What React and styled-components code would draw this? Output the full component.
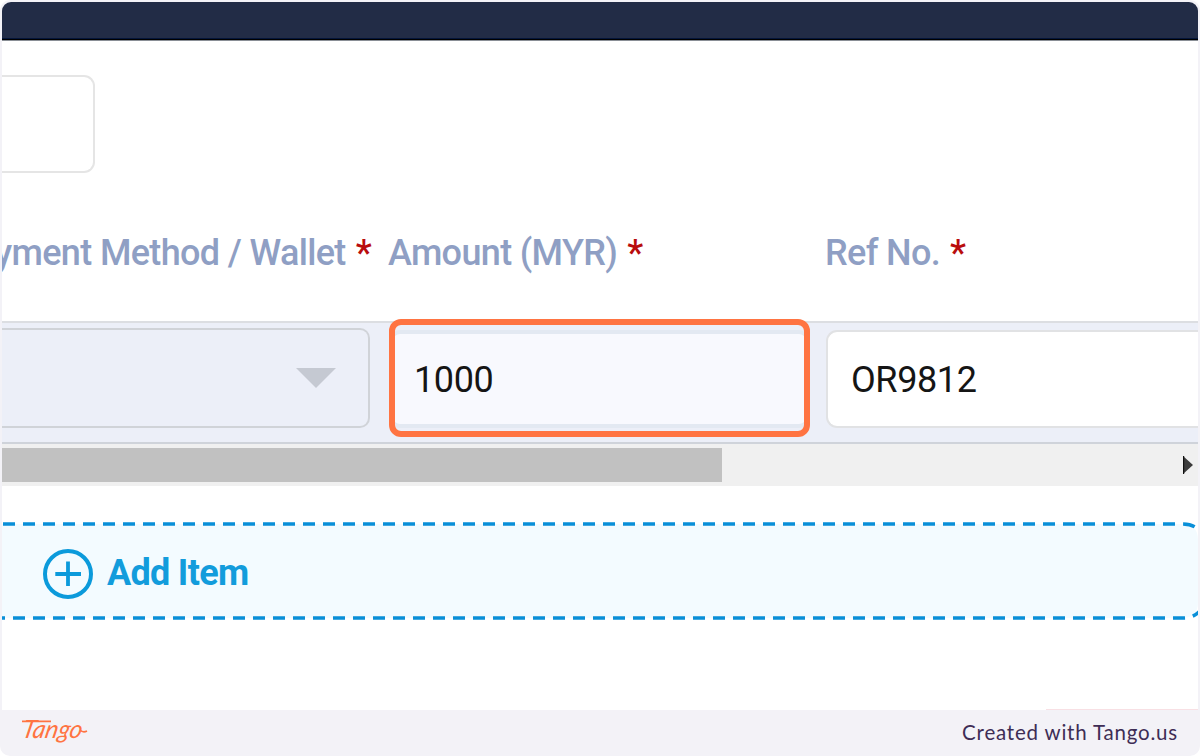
import React from 'react'
import styled, { createGlobalStyle } from 'styled-components'

const columns = [
    { name: "Payment Method / Wallet", width: 386, end: true },
    { name: "Amount (MYR)", width: 437 },
    { name: "Ref No.", width: 373 },
]

const App = () => {
    return (
        <>
            <GlobalStyle />
            <Page>
                <Screen>
                    <TopBar />
                    <FieldSection>
                        <EmptyField />
                    </FieldSection>
                    <TableHead>
                        {columns.map((column) => (
                            <HeadCell key={column.name} $width={column.width} $end={column.end}>
                                <Label>{column.name}</Label>
                                <Required>*</Required>
                            </HeadCell>
                        ))}
                    </TableHead>
                    <TableRow>
                        <SelectBox>
                            <Caret viewBox="0 0 40 20"><path d="M0 0H40L20 20Z" fill="#c5c9d2" /></Caret>
                        </SelectBox>
                        <AmountCell>
                            <AmountInput>1000</AmountInput>
                            <Highlight />
                        </AmountCell>
                        <RefInput>OR9812</RefInput>
                    </TableRow>
                    <ScrollTrack>
                        <ScrollThumb />
                        <ScrollArrow viewBox="0 0 10 18"><path d="M0 0L10 9L0 18Z" fill="#3c3c3c" /><path d="M.6 0V18" stroke="#111" strokeWidth="1.2" /></ScrollArrow>
                    </ScrollTrack>
                    <AddItem>
                        <DashedOutline viewBox="0 0 1196 100" fill="none">
                            <path d="M0 3H1180Q1196 3 1196 19V81Q1196 97 1180 97H0V3Z" fill="#f3fbff" />
                            <path d="M1 3H1180Q1188 3 1193 6" />
                            <path d="M-9 97H1182Q1191 97 1198 90" />
                        </DashedOutline>
                        <PlusIcon viewBox="0 0 50 50" fill="none">
                            <circle cx="25" cy="25" r="23" strokeWidth="4" />
                            <path d="M12.3 25H38M25 12.5V37" strokeWidth="3.8" />
                        </PlusIcon>
                        <AddLabel>Add Item</AddLabel>
                    </AddItem>
                    <BottomEdge />
                </Screen>
                <Footer>
                    <Logo viewBox="0 0 72 36">
                        <text transform="translate(1 18) skewX(-12) scale(1 1.05)" textLength="60" lengthAdjust="spacingAndGlyphs">Tango</text>
                        <path d="M2 1.3H31" />
                        <path d="M60 10Q63 13 67 11" />
                    </Logo>
                    <Credit>Created with Tango.us</Credit>
                </Footer>
            </Page>
        </>
    );
}


export default App


const GlobalStyle = createGlobalStyle`
    * {
        box-sizing: border-box;
    }
    body {
        margin: 0;
        background: #fff;
        font-family: Roboto, sans-serif;
    }
`

const Page = styled.div`
    display: flex;
    flex-direction: column;
    width: 1200px;
    height: 756px;
    padding: 2px 2px 0;
    border-radius: 10px;
    background: #f3f2f7;
    overflow: hidden;
`
const Screen = styled.div`
    display: flex;
    flex-direction: column;
    height: 708px;
    border-radius: 9px 9px 0 0;
    background: #fff;
    overflow: hidden;
`
const TopBar = styled.div`
    height: 39px;
    background: #222c46;
    border-bottom: 1px solid #8a8f96;
    box-shadow: inset 0 -1px #000, inset 0 -2px #04153a;
`
const FieldSection = styled.div`
    height: 160px;
    padding-top: 34px;
`
const EmptyField = styled.div`
    width: 93px;
    height: 98px;
    border: 2px solid #e5e5e5;
    border-left: none;
    border-radius: 0 11px 11px 0;
`

const TableHead = styled.div`
    display: flex;
    height: 120px;
    padding-top: 31px;
`
const HeadCell = styled.div`
    display: flex;
    flex-shrink: 0;
    justify-content: ${({ $end }) => $end ? "flex-end" : "flex-start"};
    width: ${({ $width }) => $width}px;
    padding-right: ${({ $end }) => $end ? "17px" : "0"};
    white-space: nowrap;
    font-size: 36px;
    font-weight: 500;
    line-height: 42px;
    letter-spacing: -0.65px;
`
const Label = styled.span`
    color: #8f9fc4;
`
const Required = styled.span`
    margin-left: 10px;
    color: #b90d0d;
`

const TableRow = styled.div`
    display: flex;
    align-items: flex-start;
    height: 123px;
    border-top: 2px solid #dcdee2;
    border-bottom: 2px solid #cfd3da;
    background: #eceff8;
`
const SelectBox = styled.div`
    display: flex;
    flex-shrink: 0;
    align-items: center;
    justify-content: flex-end;
    width: 368px;
    height: 100px;
    margin-top: 5px;
    padding-right: 32px;
    border: 2px solid #d0d3d8;
    border-left: none;
    border-radius: 0 10px 10px 0;
`
const Caret = styled.svg`
    width: 40px;
    height: 20px;
`
const InputBox = styled.div`
    display: flex;
    align-items: center;
    height: 98px;
    border-radius: 11px;
    color: #151515;
    font-size: 36px;
    line-height: 42px;
    letter-spacing: -0.4px;
`
const AmountCell = styled.div`
    position: relative;
    flex-shrink: 0;
    width: 421px;
    margin: 7px 16px 0 19px;
`
const AmountInput = styled(InputBox)`
    height: 98px;
    padding: 2px 0 0 21px;
    border: 4px solid #e3e9f2;
    background: #f8f9fe;
`
const Highlight = styled.div`
    position: absolute;
    top: -11px;
    left: 0;
    width: 421px;
    height: 118px;
    border: 6px solid #ff7442;
    border-radius: 12px;
`
const RefInput = styled(InputBox)`
    flex: 1;
    margin-top: 7px;
    padding: 2px 0 0 23px;
    border: 2px solid #e1e2e4;
    border-right: none;
    border-radius: 11px 0 0 11px;
    background: #fff;
`

const ScrollTrack = styled.div`
    display: flex;
    align-items: center;
    justify-content: space-between;
    height: 42px;
    padding-right: 5px;
    background: #f0f0f0;
`
const ScrollThumb = styled.div`
    width: 719.5px;
    height: 34px;
    background: #c1c1c1;
`
const ScrollArrow = styled.svg`
    width: 10px;
    height: 18px;
`

const AddItem = styled.div`
    position: relative;
    display: flex;
    align-items: center;
    height: 100px;
    margin-top: 35px;
    padding: 5px 0 0 41px;
`
const DashedOutline = styled.svg`
    position: absolute;
    top: 0;
    left: 0;
    width: 1196px;
    height: 100px;
    stroke: #098fd8;
    stroke-width: 3.5;
    stroke-dasharray: 12 8;

    path:first-child {
        stroke: none;
    }
`
const PlusIcon = styled.svg`
    position: relative;
    width: 50px;
    height: 50px;
    stroke: #0b9adb;
`
const AddLabel = styled.span`
    position: relative;
    margin: -1px 0 0 14px;
    color: #129cdc;
    font-size: 36px;
    font-weight: 700;
    line-height: 42px;
    letter-spacing: -0.7px;
`
const BottomEdge = styled.div`
    align-self: flex-end;
    width: 152px;
    height: 1px;
    margin-top: auto;
    background: #f8e0e4;
`

const Footer = styled.div`
    display: flex;
    align-items: center;
    justify-content: space-between;
    height: 46px;
    padding: 0 20px 0 18px;
`
const Logo = styled.svg`
    width: 72px;
    height: 36px;
    margin-top: 9px;
    overflow: visible;

    text {
        fill: #ff7442;
        font-family: Lato, sans-serif;
        font-size: 24px;
        font-style: italic;
        font-weight: 400;
    }

    path {
        fill: none;
        stroke: #ff7442;
        stroke-width: 1.7;
    }
`
const Credit = styled.span`
    margin-top: -2px;
    color: #3e2d55;
    font-family: Lato, sans-serif;
    font-size: 20.5px;
    letter-spacing: 0.8px;
`
